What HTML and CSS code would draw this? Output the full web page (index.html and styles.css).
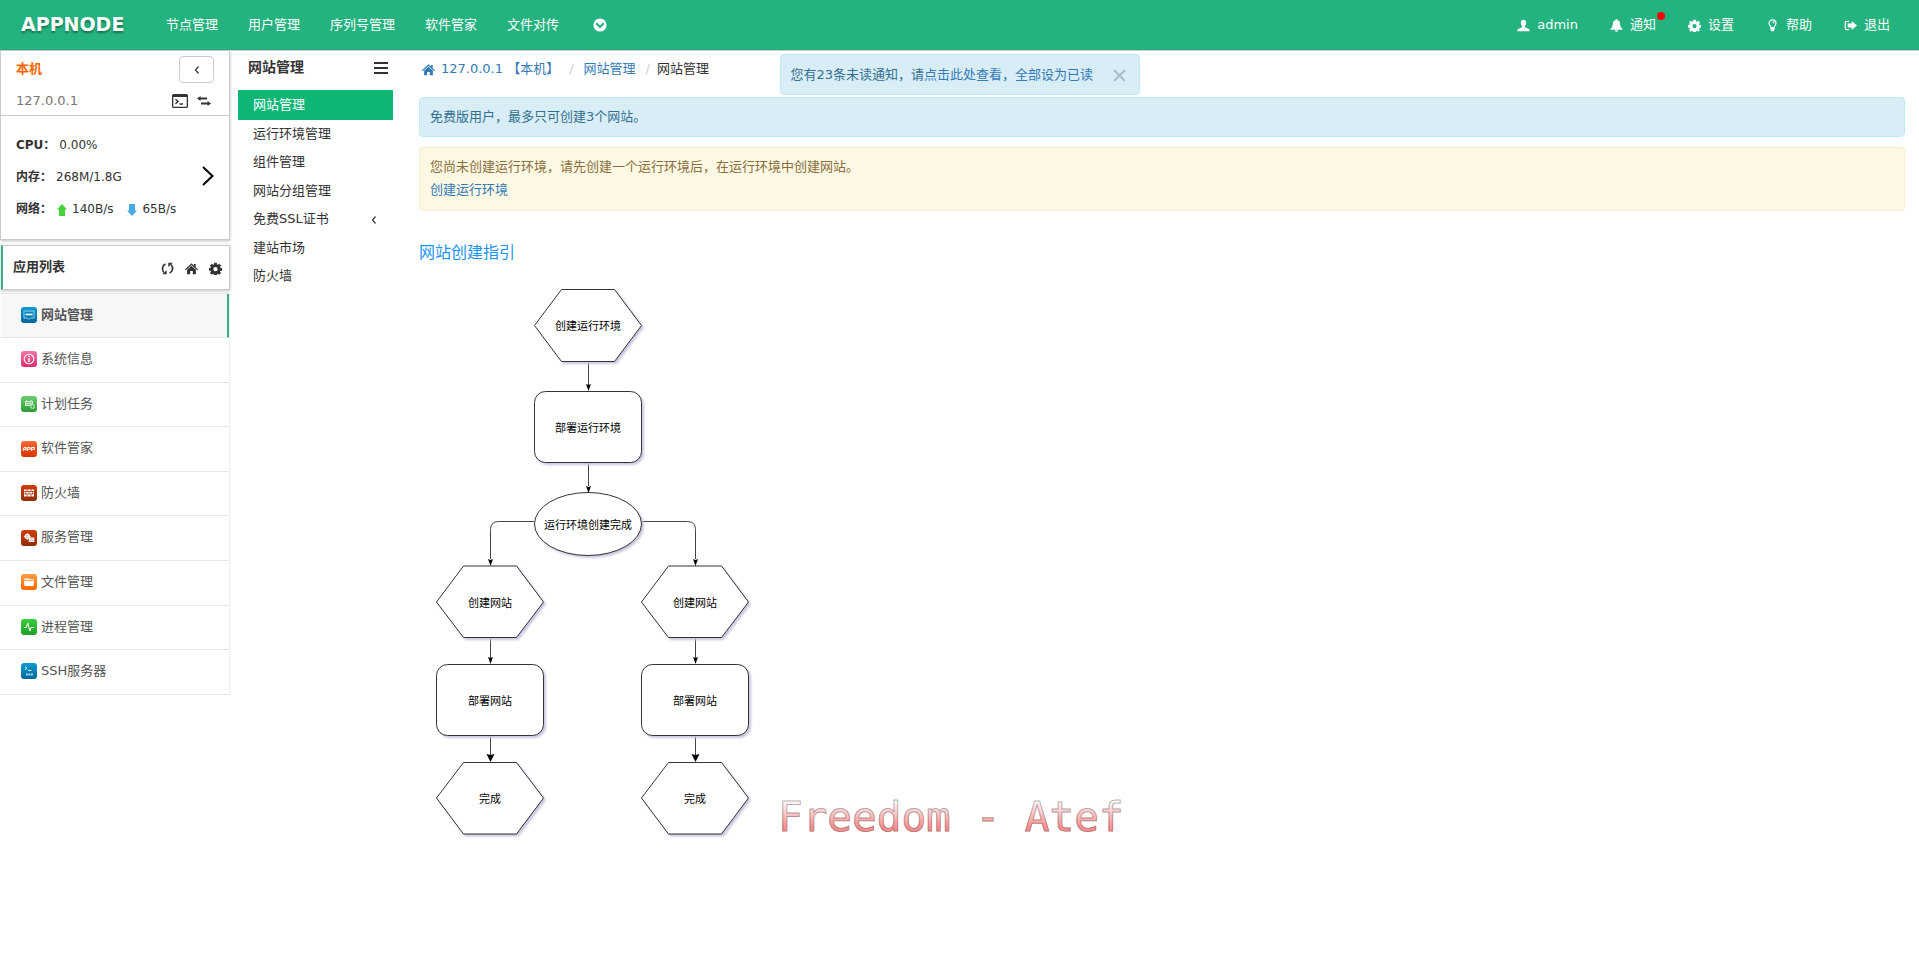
FILE: index.html
```html
<!DOCTYPE html>
<html lang="zh-CN">
<head>
<meta charset="utf-8">
<title>网站管理 - AppNode</title>
<link rel="stylesheet" href="styles.css">
</head>
<body>
<svg class="defs" aria-hidden="true">
  <defs>
    <symbol id="i-user" viewBox="0 0 16 16"><path d="M8 1C5.800 1 4.600 2.500 4.700 4.800c.1 1.700.7 2.900 1.600 3.800v1.300c-.3.9-4.200 1.500-5.300 2.600-.4.500-.5 1.500-.5 2.500h15c0-1-.1-2-.5-2.500-1.100-1.100-5-1.700-5.300-2.600V8.600c.9-.9 1.500-2.100 1.600-3.800C11.400 2.500 10.200 1 8 1z"/></symbol>
    <symbol id="i-bell" viewBox="0 0 16 16"><path d="M8 0c-.8 0-1.200.5-1.200 1.200C4.600 1.700 3.700 3.400 3.600 5.500 3.500 8.300 2.900 10 .5 12.400v.8h15v-.8C13.100 10 12.500 8.300 12.400 5.500 12.300 3.400 11.400 1.700 9.200 1.200 9.200.5 8.800 0 8 0zM6 13.800a2 2 0 0 0 4 0z"/></symbol>
    <symbol id="i-gear" viewBox="0 0 16 16"><path fill-rule="evenodd" d="M6.400 1h3.200l.4 2 .9.400 1.700-1.200 2.200 2.200-1.200 1.700.4.900 2 .4v3.200l-2 .4-.4.900 1.200 1.700-2.200 2.200-1.700-1.200-.9.400-.4 2H6.400l-.4-2-.9-.4-1.700 1.200-2.200-2.200 1.200-1.700-.4-.9-2-.4V7.400l2-.4.4-.9-1.200-1.700 2.200-2.200 1.700 1.200.9-.4zM8 6.300a2.600 2.600 0 1 0 0 5.200 2.600 2.600 0 0 0 0-5.200z"/></symbol>
    <symbol id="i-bulb" viewBox="0 0 16 16"><path fill="none" stroke="currentColor" stroke-width="1.500" d="M6 10.500C6 8.500 3.700 7.800 3.700 5.300a4.300 4.300 0 0 1 8.600 0c0 2.500-2.300 3.200-2.300 5.200zM8 3.500c1.200 0 1.900.6 1.900 1.700"/><path d="M5.500 10.500h5v3L9.300 15H6.700l-1.200-1.500z"/></symbol>
    <symbol id="i-out" viewBox="0 0 16 16"><path fill="none" stroke="currentColor" stroke-width="1.500" d="M6 2.800H3.500c-1.200 0-2 .8-2 2v6.400c0 1.200.8 2 2 2H6"/><path d="M9.500 2.500L16 8l-6.500 5.500V10.500H4.500v-5h5z"/></symbol>
    <symbol id="i-down" viewBox="0 0 16 16"><path fill-rule="evenodd" d="M8 .5a7.500 7.500 0 1 0 0 15 7.500 7.500 0 0 0 0-15zM4.600 5.200L8 8.600l3.400-3.400 1.700 1.700L8 12 2.900 6.900z"/></symbol>
    <symbol id="i-home" viewBox="0 0 16 16"><path d="M8 1.500l3 2.800V2.500h2.200v3.900L16 9l-.9 1L8 3.700.9 10 0 9z"/><path d="M8 4.600l5.400 4.900V15H9.600v-4H6.400v4H2.600V9.500z"/></symbol>
    <symbol id="i-refresh" viewBox="0 0 16 16"><path fill="none" stroke="currentColor" stroke-width="2" d="M5.500 2.500C1.500 4 .5 9.500 3.500 13M10.500 13.500C14.500 12 15.500 6.500 12.500 3"/><path d="M1.500 15H7V10zM14.500 1H9v5z"/></symbol>
    <symbol id="i-term" viewBox="0 0 16 14"><path fill-rule="evenodd" d="M1.500 0h13A1.500 1.500 0 0 1 16 1.500v11a1.500 1.500 0 0 1-1.500 1.500h-13A1.500 1.500 0 0 1 0 12.500v-11A1.500 1.500 0 0 1 1.500 0zM1.300 3v9.700h13.400V3z"/><path fill="none" stroke="currentColor" stroke-width="1.500" d="M3.500 5.200L6 7.500 3.500 9.800M7.500 10h3.500"/></symbol>
    <symbol id="i-swap" viewBox="0 0 14 10"><path d="M3.500 0v1.500H10v2H3.500V5L0 2.500zM10.500 5v1.500H4v2h6.500V10L14 7.500z"/></symbol>
    <symbol id="i-up" viewBox="0 0 10 12"><path d="M5 0l5 5.500H8V12H2V5.500H0z"/></symbol>
    <linearGradient id="g-blue" x1="0" y1="0" x2="0" y2="1"><stop offset="0" stop-color="#0f9bd1"/><stop offset="1" stop-color="#04659a"/></linearGradient>
    <linearGradient id="g-pink" x1="0" y1="0" x2="0" y2="1"><stop offset="0" stop-color="#fb74a5"/><stop offset="1" stop-color="#d82f70"/></linearGradient>
    <linearGradient id="g-green" x1="0" y1="0" x2="0" y2="1"><stop offset="0" stop-color="#6ccd6c"/><stop offset="1" stop-color="#2e9a34"/></linearGradient>
    <linearGradient id="g-red" x1="0" y1="0" x2="0" y2="1"><stop offset="0" stop-color="#fb6a35"/><stop offset="1" stop-color="#d43500"/></linearGradient>
    <linearGradient id="g-brick" x1="0" y1="0" x2="0" y2="1"><stop offset="0" stop-color="#d23c0c"/><stop offset="1" stop-color="#922d0a"/></linearGradient>
    <linearGradient id="g-orange" x1="0" y1="0" x2="0" y2="1"><stop offset="0" stop-color="#ff9d42"/><stop offset="1" stop-color="#fb6500"/></linearGradient>
    <linearGradient id="g-lime" x1="0" y1="0" x2="0" y2="1"><stop offset="0" stop-color="#3ccf3c"/><stop offset="1" stop-color="#209c2b"/></linearGradient>
  </defs>
</svg>

<header class="topbar">
  <a class="logo" href="#">APPNODE</a>
  <nav class="topnav">
    <a href="#">节点管理</a>
    <a href="#">用户管理</a>
    <a href="#">序列号管理</a>
    <a href="#">软件管家</a>
    <a href="#">文件对传</a>
    <button class="more" type="button" aria-label="更多"><svg class="icon"><use href="#i-down"/></svg></button>
  </nav>
  <nav class="topnav account">
    <a href="#"><svg class="icon"><use href="#i-user"/></svg>admin</a>
    <a href="#" class="bell"><svg class="icon"><use href="#i-bell"/></svg>通知<span class="dot"></span></a>
    <a href="#"><svg class="icon"><use href="#i-gear"/></svg>设置</a>
    <a href="#"><svg class="icon"><use href="#i-bulb"/></svg>帮助</a>
    <a href="#"><svg class="icon"><use href="#i-out"/></svg>退出</a>
  </nav>
</header>

<div class="page">
  <aside class="sidebar">
    <section class="node">
      <div class="node-head">
        <div class="row"><strong class="node-name">本机</strong>
          <button class="collapse" type="button" aria-label="收起"><svg width="6" height="8" viewBox="0 0 6 8"><path d="M4.500 .5L1.500 4l3 3.500" fill="none" stroke="currentColor" stroke-width="1.200"/></svg></button></div>
        <div class="row ip"><span>127.0.0.1</span>
          <span class="tools"><a href="#" aria-label="终端"><svg width="16" height="14"><use href="#i-term"/></svg></a><a href="#" aria-label="切换"><svg width="14" height="10"><use href="#i-swap"/></svg></a></span></div>
      </div>
      <div class="node-stats">
        <dl>
          <div><dt>CPU：</dt><dd>0.00%</dd></div>
          <div><dt>内存：</dt><dd>268M/1.8G</dd></div>
          <div><dt>网络：</dt><dd class="net"><svg class="up" width="10" height="12"><use href="#i-up"/></svg>140B/s<svg class="down" width="10" height="12"><use href="#i-up"/></svg>65B/s</dd></div>
        </dl>
        <a class="next" href="#" aria-label="详情"><svg width="12" height="20" viewBox="0 0 12 20"><path d="M1 1l9.500 9L1 19" fill="none" stroke="#000" stroke-width="2"/></svg></a>
      </div>
    </section>

    <section class="apps-head">
      <h2>应用列表</h2>
      <span class="tools"><a href="#" aria-label="刷新"><svg class="small"><use href="#i-refresh"/></svg></a><a href="#" aria-label="首页"><svg class="small"><use href="#i-home"/></svg></a><a href="#" aria-label="设置"><svg class="small"><use href="#i-gear"/></svg></a></span>
    </section>

    <nav class="apps">
      <a class="active" href="#"><svg class="app" viewBox="0 0 16 16"><rect width="16" height="16" rx="3" fill="url(#g-blue)"/><path d="M3 4h10v7H9.500L8 12.500 6.500 11H3z" fill="none" stroke="#8bd0ee"/><path d="M4.500 7.500h7" stroke="#fff" stroke-width="1.600"/></svg>网站管理</a>
      <a href="#"><svg class="app" viewBox="0 0 16 16"><rect width="16" height="16" rx="3" fill="url(#g-pink)"/><circle cx="8" cy="8" r="4.800" fill="none" stroke="#fff" stroke-width="1.100"/><path d="M8 7v4M8 4.800v1.200" stroke="#fff" stroke-width="1.400"/></svg>系统信息</a>
      <a href="#"><svg class="app" viewBox="0 0 16 16"><rect width="16" height="16" rx="3" fill="url(#g-green)"/><path d="M4 5h8v5H4z" fill="#d4f2d4"/><path d="M5 6.500h6M5 8.300h6" stroke="#55b658" stroke-width=".7"/><circle cx="11.500" cy="10.500" r="1.900" fill="#47ac4b" stroke="#d4f2d4"/><path d="M5.500 3.800v1.500M10 3.800v1.500" stroke="#d4f2d4"/></svg>计划任务</a>
      <a href="#"><svg class="app" viewBox="0 0 16 16"><rect width="16" height="16" rx="3" fill="url(#g-red)"/><path d="M2 9.800l1-3.300h2v3M2.800 8.300H5M6.300 9.800v-3.300h2.800v1.800H6.300M10.500 9.800v-3.300h3v1.800h-3" fill="none" stroke="#fff" stroke-width="1"/></svg>软件管家</a>
      <a href="#"><svg class="app" viewBox="0 0 16 16"><rect width="16" height="16" rx="3" fill="url(#g-brick)"/><path d="M3 4.500h10v7H3z" fill="#fff"/><path d="M3 6.500h10M3 9h10M6 4v2.500M10 4v2.500M4.500 6.500V9M8 6.500V9M11.500 6.500V9M6 9v3M10 9v3" stroke="#b53a12" stroke-width=".8"/></svg>防火墙</a>
      <a href="#"><svg class="app" viewBox="0 0 16 16"><rect width="16" height="16" rx="3" fill="url(#g-brick)"/><circle cx="6.300" cy="6.500" r="2" fill="none" stroke="#fff" stroke-width="1.500"/><path d="M6.300 3v7M2.800 6.500h7" stroke="#fff" stroke-width=".7"/><rect x="7.800" y="7.500" width="5.500" height="4.500" fill="#fff"/><path d="M8.500 9h4M8.500 10.500h4" stroke="#d9967e" stroke-width=".6"/></svg>服务管理</a>
      <a href="#"><svg class="app" viewBox="0 0 16 16"><rect width="16" height="16" rx="3" fill="url(#g-orange)"/><path d="M3.500 6V4h4l1 1h4v1z" fill="#ffe3c8"/><path d="M3 6.700h10l-.5 5.300h-9z" fill="#fff"/></svg>文件管理</a>
      <a href="#"><svg class="app" viewBox="0 0 16 16"><rect width="16" height="16" rx="3" fill="url(#g-lime)"/><path d="M3 8.500h2.200L6.800 4l2 8 1.400-3.500H13" fill="none" stroke="#fff"/></svg>进程管理</a>
      <a href="#"><svg class="app" viewBox="0 0 16 16"><rect width="16" height="16" rx="3" fill="url(#g-blue)"/><path d="M4 3.800l2 1.500-2 1.500M7 7.500h3.500" fill="none" stroke="#fff" stroke-width=".9"/><path d="M5 11.500h7" stroke="#9fd6ee" stroke-width="2" stroke-dasharray="2 .5"/></svg>SSH服务器</a>
    </nav>
  </aside>

  <nav class="submenu">
    <div class="submenu-head"><h2>网站管理</h2><button type="button" aria-label="菜单"><svg width="14" height="12" viewBox="0 0 14 12"><path d="M0 1h14M0 6h14M0 11h14" stroke="currentColor" stroke-width="2"/></svg></button></div>
    <a class="active" href="#">网站管理</a>
    <a href="#">运行环境管理</a>
    <a href="#">组件管理</a>
    <a href="#">网站分组管理</a>
    <a href="#">免费SSL证书<svg width="6" height="8" viewBox="0 0 6 8"><path d="M4.500 .5L1.500 4l3 3.500" fill="none" stroke="currentColor" stroke-width="1.200"/></svg></a>
    <a href="#">建站市场</a>
    <a href="#">防火墙</a>
  </nav>

  <main class="main">
    <ol class="crumbs">
      <li><a href="#"><svg class="small"><use href="#i-home"/></svg>127.0.0.1 【本机】</a></li>
      <li><a href="#">网站管理</a></li>
      <li class="current">网站管理</li>
    </ol>
    <div class="alert info">免费版用户，最多只可创建3个网站。</div>
    <div class="alert warn"><p>您尚未创建运行环境，请先创建一个运行环境后，在运行环境中创建网站。</p><p><a href="#">创建运行环境</a></p></div>
    <h1>网站创建指引</h1>
    <svg class="flow" width="340" height="570" viewBox="0 0 340 570" role="img" aria-label="网站创建流程">
      <g class="lines">
        <path d="M169.500 81v24M169.500 183v23M115 241.500H79.500q-8 0-8 8V279M223 241.500h45.500q8 0 8 8V279M71.500 358v20M71.500 456v20M276.500 358v20M276.500 456v20"/>
      </g>
      <g class="shapes">
        <path d="M115.500 45.500l27-36h53l27 36-27 36h-53z"/>
        <rect x="115.500" y="111.500" width="107" height="71" rx="11"/>
        <ellipse cx="169" cy="244" rx="53.500" ry="31.500"/>
        <path d="M17.500 322l27-36h53l27 36-27 35.500h-53zM222.500 322l27-36h53l27 36-27 35.500h-53z"/>
        <rect x="17.500" y="384.500" width="107" height="71" rx="11"/>
        <rect x="222.500" y="384.500" width="107" height="71" rx="11"/>
        <path d="M17.500 518l27-35.500h53l27 35.500-27 36h-53zM222.500 518l27-35.500h53l27 35.500-27 36h-53z"/>
      </g>
      <g class="heads">
        <path d="M167 104l2.500 1 2.500-1-2.500 7zM167 206l2.500 1 2.500-1-2.500 7zM69 279l2.500 1 2.500-1-2.500 7zM274 279l2.500 1 2.500-1-2.500 7zM69 377l2.500 1 2.500-1-2.500 7zM274 377l2.500 1 2.500-1-2.500 7zM67.500 474l4 1 4-1-4 8zM272.500 474l4 1 4-1-4 8z"/>
      </g>
      <g class="labels">
        <text x="169" y="50">创建运行环境</text>
        <text x="169" y="152">部署运行环境</text>
        <text x="169" y="249">运行环境创建完成</text>
        <text x="71" y="327">创建网站</text><text x="276" y="327">创建网站</text>
        <text x="71" y="425">部署网站</text><text x="276" y="425">部署网站</text>
        <text x="71" y="523">完成</text><text x="276" y="523">完成</text>
      </g>
    </svg>
  </main>
</div>

<div class="notice" role="alert"><span>您有23条未读通知，请<a href="#">点击此处查看</a>，<a href="#">全部设为已读</a></span><button type="button" aria-label="关闭"><svg width="13" height="13" viewBox="0 0 13 13"><path d="M1 1l11 11M12 1L1 12" stroke="currentColor" stroke-width="2"/></svg></button></div>
<div class="signature">Freedom - Atef</div>
</body>
</html>
```

FILE: styles.css
```css
* { box-sizing: border-box; }

body {
  margin: 0;
  background: #fff;
  color: #333;
  font: 13px/1.42857 "DejaVu Sans", "Noto Sans CJK SC", sans-serif;
}

a { color: #337ab7; text-decoration: none; }
button { padding: 0; border: 0; background: none; color: inherit; font: inherit; cursor: pointer; }
h1, h2, p, ol, dl, dd { margin: 0; padding: 0; }
svg { display: block; flex: none; fill: currentColor; }
.defs { position: absolute; width: 0; height: 0; }
.small { width: 13px; height: 13px; }

/* Top bar */
.topbar {
  display: flex;
  align-items: center;
  height: 51px;
  padding: 0 14px 0 21px;
  border-bottom: 1px solid #ccc;
  background: #24b27e;
}
.logo {
  width: 130px;
  padding-bottom: 2px;
  color: #fff;
  font-size: 19px;
  font-weight: bold;
  line-height: 1;
  text-shadow: 0 2px 2px rgba(0, 0, 0, .35);
}
.topnav { display: flex; align-items: center; }
.topnav a, .more { display: flex; align-items: center; gap: 5px; padding: 0 15px; color: #fff; }
.topnav .more { padding: 0 19px; }
.more .icon { width: 14px; height: 14px; }
.account { margin-left: auto; }
.account .icon { width: 17px; height: 13px; }
.bell { position: relative; }
.bell .dot {
  position: absolute;
  top: -4px;
  right: 6px;
  width: 8px;
  height: 8px;
  border-radius: 50%;
  background: #f00;
}

.page { display: flex; align-items: flex-start; }

/* Left column */
.sidebar { flex: none; width: 230px; }
.sidebar .tools a { color: #333; }
.node {
  border: 1px solid #ccc;
  border-top: 0;
  box-shadow: 0 1px 3px rgba(0, 0, 0, .25);
}
.node-head { padding: 5px 15px 4px; border-bottom: 1px solid #ccc; }
.row { display: flex; align-items: center; justify-content: space-between; }
.node-name { color: #f60; }
.collapse {
  display: grid;
  place-items: center;
  width: 35px;
  height: 27px;
  border: 1px solid #ccc;
  border-radius: 4px;
}
.ip { padding-top: 9px; color: #777; }
.tools { display: flex; align-items: center; }
.ip .tools { gap: 9px; padding-right: 3px; }
.node-stats {
  display: flex;
  align-items: center;
  justify-content: space-between;
  padding: 14px 15px 13px;
  font-size: 12px;
}
.node-stats dl > div { display: flex; align-items: center; gap: 4px; height: 32px; }
.node-stats dt { font-weight: bold; }
.net { display: flex; align-items: center; gap: 5px; }
.net .up { margin-left: 1px; color: #46d13c; }
.net .down { margin-left: 9px; color: #45ade4; transform: rotate(180deg); }
.next { padding-bottom: 4px; }

.apps-head {
  display: flex;
  align-items: center;
  justify-content: space-between;
  height: 45px;
  margin: 5px 0 3px 1px;
  padding: 0 7px 0 10px;
  border: 1px solid #ccc;
  border-left: 2px solid #3bb082;
  box-shadow: 0 1px 3px rgba(0, 0, 0, .25);
}
.apps-head h2 { font-size: 13px; }
.apps-head .tools { gap: 11px; padding-top: 3px; }

.apps { margin-left: 1px; border-right: 1px solid #eee; border-top: 1px solid #e5e5e5; }
.apps a {
  display: flex;
  align-items: center;
  gap: 4px;
  padding: 12px 0 13px 20px;
  border-bottom: 1px solid #e5e5e5;
  color: #555;
}
.apps .active { border-right: 2px solid #3bb082; background: #f7f7f7; font-weight: bold; }
.app { width: 16px; height: 16px; }

/* Section menu */
.submenu { flex: none; width: 155px; margin-left: 8px; }
.submenu-head { display: flex; align-items: center; justify-content: space-between; height: 39px; padding: 0 5px 6px 10px; }
.submenu-head h2 { font-size: 14px; }
.submenu a {
  display: flex;
  align-items: center;
  justify-content: space-between;
  padding: 5px 16px 5px 15px;
  color: #333;
}
.submenu .active { padding-top: 6px; background: #0fb776; color: #fff; }

/* Content */
.main { flex: 1; min-width: 0; padding: 0 14px 0 26px; }
.crumbs { display: flex; align-items: center; gap: 10px; height: 46px; padding: 0 0 10px 3px; list-style: none; }
.crumbs li, .crumbs a { display: flex; align-items: center; }
.crumbs a { gap: 6px; }
.crumbs li + li::before { content: "/"; padding-right: 10px; color: #ccc; }
.crumbs .current::before { padding-right: 7px; }
.alert { margin-bottom: 10px; padding: 10px 10px 9px; border: 1px solid; border-radius: 4px; }
.info { border-color: #bce8f1; background: #d9edf7; color: #31708f; }
.warn { padding-bottom: 10px; border-color: #faebcc; background: #fcf8e3; color: #8a6d3b; }
.warn p + p { margin-top: 5px; }
.main h1 { margin: 31px 0 15px; color: #1b95f5; font-size: 16px; font-weight: normal; }

.flow .lines { fill: none; stroke: #444; }
.flow .heads { fill: #000; }
.flow .shapes { fill: #fff; stroke: #333; filter: drop-shadow(2px 2px 1px #c6c6de); }
.flow .labels { fill: #000; font-size: 11px; text-anchor: middle; }

/* Overlays */
.notice {
  position: absolute;
  top: 54px;
  left: 50%;
  display: flex;
  align-items: center;
  justify-content: space-between;
  width: 360px;
  height: 41px;
  padding: 1px 13px 0 10px;
  transform: translateX(-50%);
  border: 1px solid #bce8f1;
  border-radius: 4px;
  background: #d9edf7;
  color: #31708f;
}
.notice button { color: #000; opacity: .2; }
.signature {
  position: absolute;
  top: 793px;
  left: 778px;
  background: linear-gradient(#fff 15%, #ff9090 70%);
  background-clip: text;
  -webkit-background-clip: text;
  color: transparent;
  font: 41px/48px "DejaVu Sans Mono", monospace;
  -webkit-text-stroke: 1px rgba(90, 90, 90, .45);
}
```
